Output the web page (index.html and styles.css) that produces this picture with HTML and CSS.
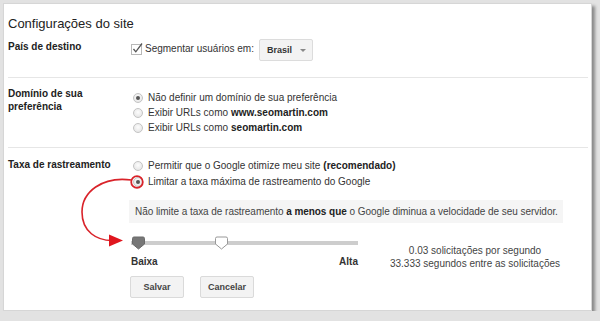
FILE: index.html
```html
<!DOCTYPE html>
<html lang="pt-BR">
<head>
  <meta charset="UTF-8" />
  <title>Configurações do site</title>
  <link rel="stylesheet" href="styles.css">
</head>
<body>

  <div class="card">
    <h1>Configurações do site</h1>

    <!-- País de destino -->
    <div class="row row-country">
      <div class="label">País de destino</div>
      <div class="field field-inline">
        <svg class="checkbox" width="13" height="13" viewBox="0 0 13 13">
          <rect x="0.5" y="2.5" width="10" height="10" fill="#fff" stroke="#b8b8b8"/>
          <path d="M2.5 7 L4.8 9.8 L11 1.5" fill="none" stroke="#555" stroke-width="1.3"/>
        </svg>
        <span class="check-text">Segmentar usuários em:</span>
        <div class="select">Brasil <span class="caret"></span></div>
      </div>
    </div>

    <!-- Domínio -->
    <div class="row row-domain">
      <div class="label">Domínio de sua<br>preferência</div>
      <div class="field options">
        <div class="option"><span class="radio checked"></span>Não definir um domínio de sua preferência</div>
        <div class="option"><span class="radio"></span>Exibir URLs como <b>www.seomartin.com</b></div>
        <div class="option"><span class="radio"></span>Exibir URLs como <b>seomartin.com</b></div>
      </div>
    </div>

    <!-- Taxa de rastreamento -->
    <div class="row row-crawl">
      <div class="label">Taxa de rastreamento</div>
      <div class="field">
        <div class="options options-crawl">
          <div class="option"><span class="radio"></span>Permitir que o Google otimize meu site <b>(recomendado)</b></div>
          <div class="option"><span class="radio checked"></span>Limitar a taxa máxima de rastreamento do Google</div>
        </div>

        <div class="notice">Não limite a taxa de rastreamento <b>a menos que</b> o Google diminua a velocidade de seu servidor.</div>

        <div class="rate">
          <div class="slider">
            <div class="track">
              <svg class="handle handle-low" width="15" height="14" viewBox="0 0 15 14">
                <path d="M1.5 2.5 Q1.5 1 3 1 H12 Q13.5 1 13.5 2.5 V8 L7.5 13 L1.5 8 Z" fill="#777" stroke="#6a6a6a"/>
              </svg>
              <svg class="handle handle-high" width="15" height="14" viewBox="0 0 15 14">
                <path d="M1.5 2.5 Q1.5 1 3 1 H12 Q13.5 1 13.5 2.5 V8 L7.5 13 L1.5 8 Z" fill="#fff" stroke="#999"/>
              </svg>
            </div>
            <div class="scale">
              <span>Baixa</span>
              <span>Alta</span>
            </div>
          </div>
          <div class="stats">
            0.03 solicitações por segundo<br>
            33.333 segundos entre as solicitações
          </div>
        </div>

        <div class="buttons">
          <button>Salvar</button>
          <button>Cancelar</button>
        </div>
      </div>
    </div>

    <!-- Red annotation arrow -->
    <svg class="annotation" width="600" height="321" viewBox="0 0 600 321">
      <circle cx="137" cy="182" r="5.8" fill="none" stroke="#d9232a" stroke-width="1.8"/>
      <path d="M131.5 180 C 102 176 82 192 82 212 C 82 232 97 240.5 112 240.5" fill="none" stroke="#d9232a" stroke-width="1.6"/>
      <polygon points="109,234.5 123,240.5 109,246.5" fill="#e0161e"/>
    </svg>
  </div>

</body>
</html>
```

FILE: styles.css
```css
* {
  margin: 0;
  padding: 0;
  box-sizing: border-box;
}

body {
  background: #e2e2e2;
  font-family: 'Liberation Sans', Arial, sans-serif;
  font-size: 10px;
  color: #222;
}

/* Card */
.card {
  position: relative;
  width: 589px;
  height: 308px;
  margin: 3px 0 0 3px;
  padding: 0 3px 0 4px;
  background: #fff;
  border: 1px solid #d6d6d6;
  box-shadow: 3px 3px 3px #8a8a8a;
}

h1 {
  margin-top: 11px;
  font-size: 13px;
  line-height: 17px;
  font-weight: normal;
  color: #222;
}

/* Rows */
.row {
  display: grid;
  grid-template-columns: 122px 1fr;
}

.row + .row {
  border-top: 1px solid #e6e6e6;
}

.label {
  font-weight: bold;
  line-height: 13px;
  color: #222;
}

.row-country {
  padding: 7px 0 16px;
}

.row-country .label {
  padding-top: 1px;
}

.field-inline {
  display: flex;
  align-items: center;
}

.checkbox {
  margin-left: 1px;
  margin-right: 1px;
  margin-top: -4px;
}

.check-text {
  color: #333;
  margin-right: 5px;
  padding-bottom: 4px;
}

.select {
  width: 54px;
  height: 22px;
  padding-left: 7px;
  display: flex;
  align-items: center;
  background: #f3f3f3;
  border: 1px solid #dcdcdc;
  border-radius: 2px;
  font-weight: bold;
  font-size: 9px;
  color: #333;
}

.caret {
  margin-left: auto;
  margin-right: 6px;
  border-left: 3px solid transparent;
  border-right: 3px solid transparent;
  border-top: 3px solid #888;
}

/* Radio lists */
.row-domain {
  padding: 9px 0 12px;
}

.options {
  padding-top: 3px;
}

.option {
  display: flex;
  align-items: center;
  line-height: 15px;
  color: #333;
}

.option b {
  color: #222;
  margin-left: 3px;
}

.radio {
  width: 10px;
  height: 10px;
  margin-right: 5px;
  margin-left: 3px;
  border-radius: 50%;
  border: 1px solid #c4c4c4;
  background: radial-gradient(circle at 50% 40%, #fdfdfd, #e0e0e0);
  position: relative;
}

.radio.checked::after {
  content: "";
  position: absolute;
  left: 2px;
  top: 2px;
  width: 4px;
  height: 4px;
  border-radius: 50%;
  background: #555;
}

.row-crawl {
  padding-top: 10px;
}

.options-crawl {
  padding-top: 0;
}

.options-crawl .option {
  line-height: 16px;
}

/* Notice */
.notice {
  margin-top: 10px;
  width: 434px;
  height: 23px;
  line-height: 23px;
  padding-left: 6px;
  margin-left: -1px;
  background: #f5f5f5;
  color: #444;
  white-space: nowrap;
  letter-spacing: -0.05px;
}

.notice b {
  color: #222;
}

/* Slider */
.rate {
  display: flex;
  margin-top: 13px;
}

.slider {
  width: 227px;
  margin-left: 1px;
}

.track {
  position: relative;
  height: 14px;
  background: linear-gradient(#fff 5px, #cdcdcd 5px, #cdcdcd 9px, #fff 9px);
}

.handle {
  position: absolute;
  top: 0;
}

.handle-low {
  left: 0;
}

.handle-high {
  left: 83px;
}

.scale {
  display: flex;
  justify-content: space-between;
  margin-top: 5px;
  line-height: 13px;
  font-weight: bold;
  color: #333;
}

.stats {
  width: 200px;
  margin-left: 17px;
  padding-top: 8px;
  line-height: 13px;
  text-align: center;
  color: #444;
}

/* Buttons */
.buttons {
  display: flex;
  gap: 16px;
  margin-top: 6px;
}

button {
  width: 54px;
  height: 22px;
  font-family: 'Liberation Sans', Arial, sans-serif;
  font-size: 9px;
  font-weight: bold;
  color: #444;
  background: #f3f3f3;
  border: 1px solid #dadada;
  border-radius: 2px;
}

/* Annotation */
.annotation {
  position: absolute;
  left: -4px;
  top: -4px;
  pointer-events: none;
}
```
